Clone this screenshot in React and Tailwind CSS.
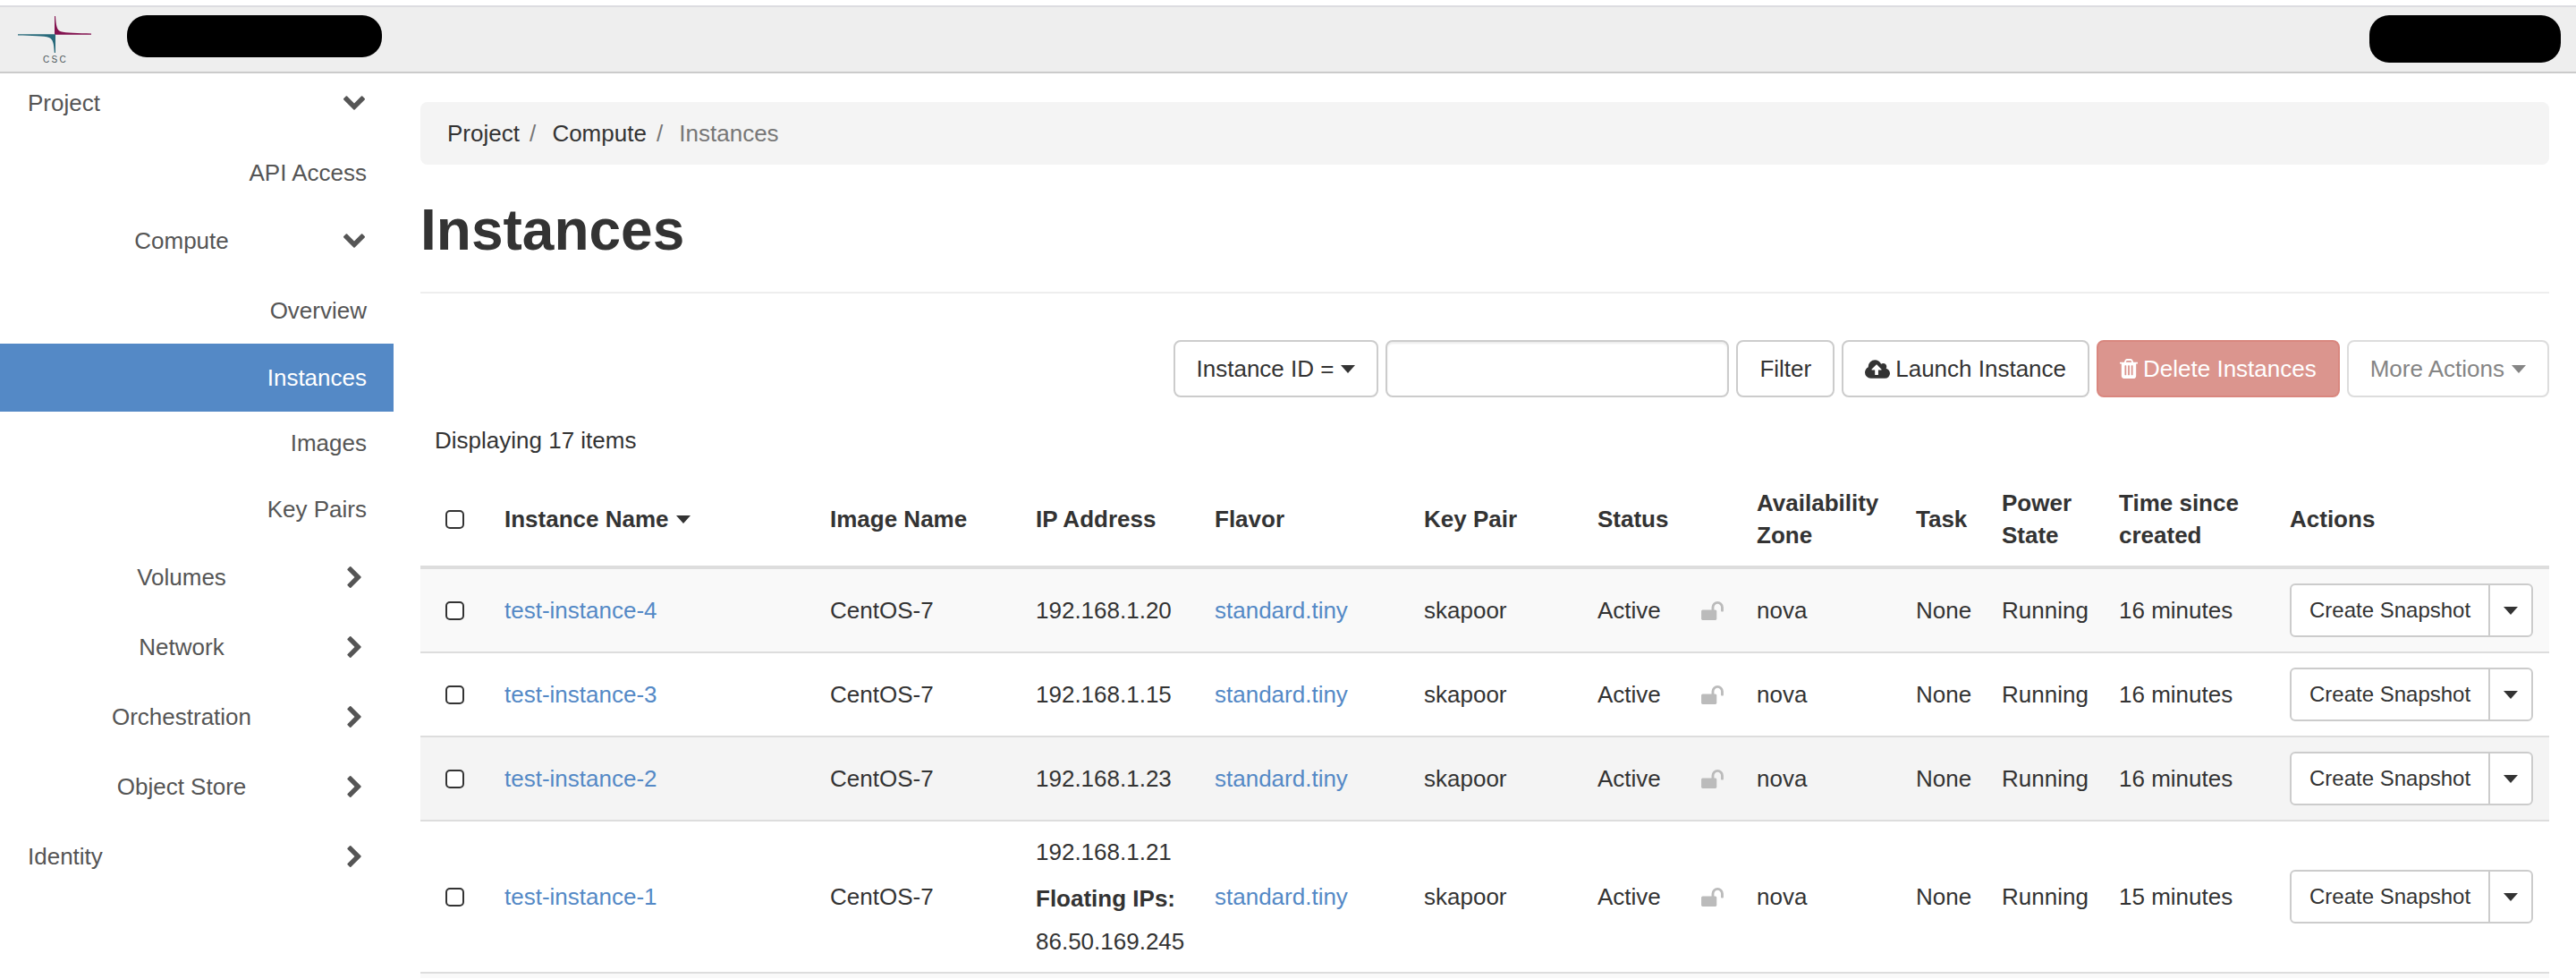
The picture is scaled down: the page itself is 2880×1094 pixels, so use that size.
import React from "react";

const CHEVRON =
  "M1683 808l-742 741q-19 19-45 19t-45-19l-742-741q-19-19-19-45.5t19-45.5l166-165q19-19 45-19t45 19l531 531 531-531q19-19 45-19t45 19l166 165q19 19 19 45.5t-19 45.5z";
const CLOUD_UPLOAD =
  "M1344 864q0-14-9-23l-352-352q-9-9-23-9t-23 9l-351 351q-10 12-10 24 0 14 9 23t23 9h224v352q0 13 9.5 22.5t22.5 9.5h192q13 0 22.5-9.5t9.5-22.5v-352h224q13 0 22.5-9.5t9.5-22.5zm640 288q0 159-112.5 271.5t-271.5 112.5h-1088q-185 0-316.5-131.5t-131.5-316.5q0-130 70-240t188-165q-2-30-2-43 0-212 150-362t362-150q156 0 285.5 87t188.5 231q71-62 166-62 106 0 181 75t75 181q0 76-41 138 130 31 213.5 135.5t83.5 238.5z";
const TRASH =
  "M704 1376v-704q0-14-9-23t-23-9h-64q-14 0-23 9t-9 23v704q0 14 9 23t23 9h64q14 0 23-9t9-23zm256 0v-704q0-14-9-23t-23-9h-64q-14 0-23 9t-9 23v704q0 14 9 23t23 9h64q14 0 23-9t9-23zm256 0v-704q0-14-9-23t-23-9h-64q-14 0-23 9t-9 23v704q0 14 9 23t23 9h64q14 0 23-9t9-23zm-544-992h448l-48-117q-7-9-17-11h-317q-10 2-17 11zm928 32v64q0 14-9 23t-23 9h-96v948q0 83-47 143.5t-113 60.5h-832q-66 0-113-58.5t-47-141.5v-952h-96q-14 0-23-9t-9-23v-64q0-14 9-23t23-9h309l70-167q15-37 54-63t79-26h320q40 0 79 26t54 63l70 167h309q14 0 23 9t9 23z";
const UNLOCK =
  "M1664 576v256q0 26-19 45t-45 19h-64q-26 0-45-19t-19-45v-256q0-106-75-181t-181-75-181 75-75 181v192h96q40 0 68 28t28 68v576q0 40-28 68t-68 28h-960q-40 0-68-28t-28-68v-576q0-40 28-68t68-28h672v-192q0-185 131.5-316.5t316.5-131.5 316.5 131.5 131.5 316.5z";

function Chevron({ open }) {
  return (
    <svg
      aria-hidden="true"
      viewBox="90 244 1612 1612"
      className={open ? "size-6 shrink-0" : "size-6 shrink-0 -rotate-90"}
    >
      <path d={CHEVRON} fill="currentColor" />
    </svg>
  );
}

function Caret() {
  return (
    <svg aria-hidden="true" viewBox="0 0 16 9" className="h-[9px] w-4 shrink-0">
      <path d="M0 0h16L8 9z" fill="currentColor" />
    </svg>
  );
}

function Logo() {
  return (
    <svg role="img" aria-label="CSC" viewBox="0 0 84 56" className="h-14 w-[84px]">
      <path
        d="M41 0h1c.6 11 1.6 15.500 6 17.300 5 1.600 20 1.900 34 2.100v1.300H41z"
        fill="#83124f"
      />
      <path
        d="M42 41h-1.200c-.6-11-1.600-15-6-17-5-1.700-20-2.200-34.800-2.400V20.200h42z"
        fill="#27697a"
      />
      <text
        x="28 37.500 46.500"
        y="52"
        fontSize="10"
        fill="#4d575b"
        fontFamily="Liberation Sans, sans-serif"
      >
        CSC
      </text>
    </svg>
  );
}

function Header() {
  return (
    <header className="pt-1.5">
      <div className="flex h-19 items-start border-y-2 border-t-[#dcdce0] border-b-[#cbcbcb] bg-[#eee] pr-[17px] pl-5">
        <a href="#home" className="mt-2.5">
          <Logo />
        </a>
        <span className="mt-[9px] ml-[38px] h-[47px] w-[285px] rounded-[22px] bg-black" />
        <span className="mt-[9px] ml-auto h-[53px] w-[214px] rounded-[22px] bg-black" />
      </div>
    </header>
  );
}

function Group({ label, open, top, nested, children }) {
  return (
    <li>
      <button
        type="button"
        aria-expanded={!!open}
        className={`flex w-full items-center pr-8 ${top ? "h-[66px]" : "h-[78px]"} ${
          nested ? "pl-[22px]" : "pl-[31px]"
        }`}
      >
        <span className={`flex-1 ${nested ? "text-center" : "text-left"}`}>{label}</span>
        <Chevron open={open} />
      </button>
      {children}
    </li>
  );
}

function Leaf({ label, active }) {
  return (
    <li>
      <a
        href={"#" + label.toLowerCase().replace(" ", "-")}
        aria-current={active ? "page" : undefined}
        className={`flex items-center justify-end pr-[30px] ${
          active ? "-mb-0.5 h-19 bg-[#5489c6] text-white" : "h-[74px]"
        }`}
      >
        {label}
      </a>
    </li>
  );
}

function Sidebar() {
  return (
    <nav aria-label="Main" className="w-[440px] shrink-0 text-[#555]">
      <ul>
        <Group label="Project" open top>
          <ul className="mt-2">
            <Leaf label="API Access" />
            <Group label="Compute" open nested>
              <ul className="mt-0.5">
                <Leaf label="Overview" />
                <Leaf label="Instances" active />
                <Leaf label="Images" />
                <Leaf label="Key Pairs" />
              </ul>
            </Group>
            <Group label="Volumes" nested />
            <Group label="Network" nested />
            <Group label="Orchestration" nested />
            <Group label="Object Store" nested />
          </ul>
        </Group>
        <Group label="Identity" />
      </ul>
    </nav>
  );
}

const BUTTON = "flex h-16 items-center rounded-lg border-2 px-6 whitespace-nowrap";

function Toolbar() {
  return (
    <form className="flex justify-end gap-2" onSubmit={(e) => e.preventDefault()}>
      <button type="button" aria-haspopup="menu" className={`${BUTTON} gap-2 border-[#ccc]`}>
        Instance ID = <Caret />
      </button>
      <input
        type="text"
        aria-label="Filter value"
        className="h-16 w-96 rounded-lg border-2 border-[#ccc] px-6 shadow-[inset_0_2px_2px_rgba(0,0,0,0.075)]"
      />
      <button type="submit" className={`${BUTTON} border-[#ccc]`}>
        Filter
      </button>
      <button type="button" className={`${BUTTON} gap-1.5 border-[#ccc]`}>
        <svg aria-hidden="true" viewBox="64 128 1920 1408" className="h-[21px] w-7">
          <path d={CLOUD_UPLOAD} fill="currentColor" />
        </svg>
        Launch Instance
      </button>
      <button
        type="button"
        disabled
        className={`${BUTTON} gap-1.5 border-[#d9877f] bg-[#db958e] text-white`}
      >
        <svg aria-hidden="true" viewBox="192 128 1408 1536" className="h-[22px] w-5">
          <path d={TRASH} fill="currentColor" />
        </svg>
        Delete Instances
      </button>
      <button
        type="button"
        disabled
        className={`${BUTTON} gap-2 border-[#ddd] text-[#858585]`}
      >
        More Actions <Caret />
      </button>
    </form>
  );
}

function Check({ label }) {
  return (
    <input
      type="checkbox"
      aria-label={label}
      className="ml-3 block size-[21px] appearance-none rounded-[5px] border-2 border-[#333] bg-white"
    />
  );
}

const ROWS = [
  { name: "test-instance-4", ip: "192.168.1.20", age: "16 minutes", bg: "bg-[#f9f9f9]" },
  { name: "test-instance-3", ip: "192.168.1.15", age: "16 minutes", bg: "bg-white" },
  { name: "test-instance-2", ip: "192.168.1.23", age: "16 minutes", bg: "bg-[#f4f4f4]" },
  {
    name: "test-instance-1",
    ip: "192.168.1.21",
    floating: "86.50.169.245",
    age: "15 minutes",
    bg: "bg-white",
  },
];

function Row({ row }) {
  return (
    <tr className={`border-b-2 border-[#ddd] ${row.bg}`}>
      <td className="px-4">
        <Check label={"Select " + row.name} />
      </td>
      <td className="px-4">
        <a href="#instance" className="text-[#5489c6]">
          {row.name}
        </a>
      </td>
      <td className="px-4">CentOS-7</td>
      <td className="p-4">
        {row.ip}
        {row.floating && (
          <>
            <div className="mt-4 mb-3 font-bold">Floating IPs:</div>
            <div>{row.floating}</div>
          </>
        )}
      </td>
      <td className="px-4">
        <a href="#flavor" className="text-[#5489c6]">
          standard.tiny
        </a>
      </td>
      <td className="px-4">skapoor</td>
      <td className="px-4">Active</td>
      <td className="px-4 text-[#bbb]">
        <svg role="img" aria-label="Unlocked" viewBox="0 128 1664 1408" className="h-[21px] w-[25px]">
          <path d={UNLOCK} fill="currentColor" />
        </svg>
      </td>
      <td className="px-4">nova</td>
      <td className="px-4">None</td>
      <td className="px-4">Running</td>
      <td className="px-4">{row.age}</td>
      <td className="p-4">
        <div className="flex text-2xl">
          <button
            type="button"
            className="h-15 rounded-l-md border-2 border-[#ccc] bg-white px-5 whitespace-nowrap"
          >
            Create Snapshot
          </button>
          <button
            type="button"
            aria-label={"More actions for " + row.name}
            className="-ml-0.5 flex h-15 w-[50px] items-center justify-center rounded-r-md border-2 border-[#ccc] bg-white"
          >
            <Caret />
          </button>
        </div>
      </td>
    </tr>
  );
}

function InstancesTable() {
  return (
    <table className="mt-[30px] w-full table-fixed border-collapse text-left">
      <caption className="mb-[18px] px-4 text-left">Displaying 17 items</caption>
      <colgroup>
        <col className="w-[78px]" />
        <col className="w-[364px]" />
        <col className="w-[230px]" />
        <col className="w-[200px]" />
        <col className="w-[234px]" />
        <col className="w-[194px]" />
        <col className="w-[116px]" />
        <col className="w-[62px]" />
        <col className="w-[178px]" />
        <col className="w-[96px]" />
        <col className="w-[131px]" />
        <col className="w-[191px]" />
        <col className="w-[306px]" />
      </colgroup>
      <thead>
        <tr className="border-b-4 border-[#ddd]">
          <th className="p-4">
            <Check label="Select all" />
          </th>
          <th className="p-4" aria-sort="descending">
            <span className="flex items-center gap-2">
              Instance Name <Caret />
            </span>
          </th>
          <th className="p-4">Image Name</th>
          <th className="p-4">IP Address</th>
          <th className="p-4">Flavor</th>
          <th className="p-4">Key Pair</th>
          <th className="p-4">Status</th>
          <th />
          <th className="p-4">Availability Zone</th>
          <th className="p-4">Task</th>
          <th className="p-4">Power State</th>
          <th className="p-4">Time since created</th>
          <th className="p-4">Actions</th>
        </tr>
      </thead>
      <tbody>
        {ROWS.map((row) => (
          <Row key={row.name} row={row} />
        ))}
        <tr className="h-1.5 bg-[#f9f9f9]">
          <td colSpan={13} />
        </tr>
      </tbody>
    </table>
  );
}

export default function App() {
  return (
    <div className="bg-white font-['Liberation_Sans',Arial,sans-serif] text-[26px] leading-9 text-[#333]">
      <Header />
      <div className="flex">
        <Sidebar />
        <main className="min-w-0 flex-1 px-[30px] pt-8">
          <nav aria-label="Breadcrumb" className="rounded-lg bg-[#f4f4f4] px-[30px] py-[17px]">
            <ol className="flex text-[#777]">
              <li>
                <a href="#project" className="text-[#333]">
                  Project
                </a>
                <span className="px-[11px]">/&nbsp;</span>
              </li>
              <li>
                <a href="#compute" className="text-[#333]">
                  Compute
                </a>
                <span className="px-[11px]">/&nbsp;</span>
              </li>
              <li aria-current="page">Instances</li>
            </ol>
          </nav>
          <h1 className="mt-9 border-b-2 border-[#eee] pb-8 text-[64px] leading-[74px] font-bold">
            Instances
          </h1>
          <div className="mt-13">
            <Toolbar />
          </div>
          <InstancesTable />
        </main>
      </div>
    </div>
  );
}
